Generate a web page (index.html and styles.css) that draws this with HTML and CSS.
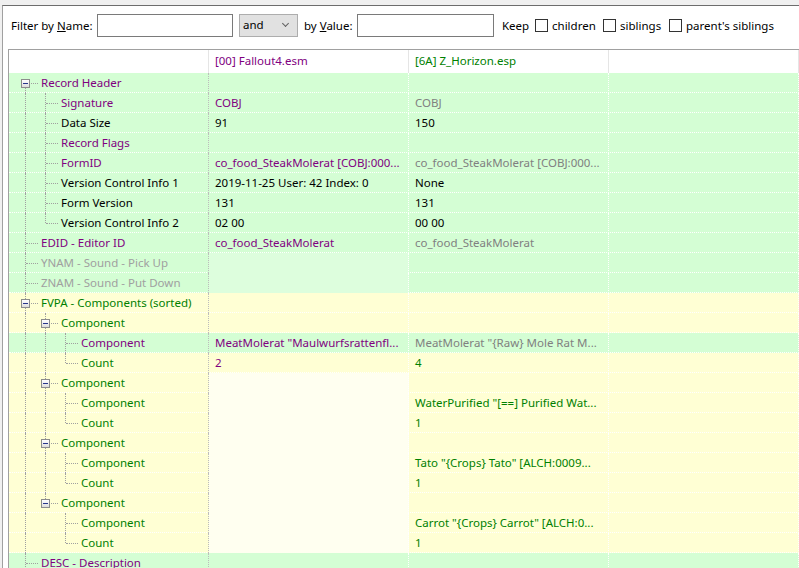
FILE: index.html
```html
<!DOCTYPE html>
<html lang="en">
<head>
    <meta charset="UTF-8">
    <title>Record View - COBJ</title>
    <link rel="stylesheet" href="styles.css">
</head>
<body>
    <div class="frame">

        <!-- Filter bar -->
        <div class="filter">
            <span class="lbl lbl-name">Filter by <u>N</u>ame:</span>
            <input class="txt txt-name" type="text">
            <div class="combo">and<span class="chev"></span></div>
            <span class="lbl lbl-value">by <u>V</u>alue:</span>
            <input class="txt txt-value" type="text">
            <span class="lbl lbl-keep">Keep</span>
            <span class="chk"></span><span class="lbl chk-lbl w-children">children</span>
            <span class="chk"></span><span class="lbl chk-lbl w-siblings">siblings</span>
            <span class="chk"></span><span class="lbl chk-lbl">parent's siblings</span>
        </div>

        <!-- Record tree -->
        <div class="tree">
            <div class="row head">
                <div class="name"></div>
                <div class="c purple">[00] Fallout4.esm</div>
                <div class="c green">[6A] Z_Horizon.esp</div>
                <div class="c"></div>
            </div>

            <div class="row bg-g">
                <div class="name"><span class="g v-bot h"><i class="box"></i></span><span class="t purple">Record Header</span></div>
                <div class="c"></div><div class="c"></div><div class="c"></div>
            </div>
            <div class="row bg-g">
                <div class="name"><span class="g v-full"></span><span class="g v-full h"></span><span class="t purple">Signature</span></div>
                <div class="c purple">COBJ</div><div class="c grey">COBJ</div><div class="c"></div>
            </div>
            <div class="row bg-g">
                <div class="name"><span class="g v-full"></span><span class="g v-full h"></span><span class="t">Data Size</span></div>
                <div class="c">91</div><div class="c">150</div><div class="c"></div>
            </div>
            <div class="row bg-g">
                <div class="name"><span class="g v-full"></span><span class="g v-full h"></span><span class="t purple">Record Flags</span></div>
                <div class="c"></div><div class="c"></div><div class="c"></div>
            </div>
            <div class="row bg-g">
                <div class="name"><span class="g v-full"></span><span class="g v-full h"></span><span class="t purple">FormID</span></div>
                <div class="c purple">co_food_SteakMolerat [COBJ:000...</div><div class="c grey">co_food_SteakMolerat [COBJ:000...</div><div class="c"></div>
            </div>
            <div class="row bg-g">
                <div class="name"><span class="g v-full"></span><span class="g v-full h"></span><span class="t">Version Control Info 1</span></div>
                <div class="c">2019-11-25 User: 42 Index: 0</div><div class="c">None</div><div class="c"></div>
            </div>
            <div class="row bg-g">
                <div class="name"><span class="g v-full"></span><span class="g v-full h"></span><span class="t">Form Version</span></div>
                <div class="c">131</div><div class="c">131</div><div class="c"></div>
            </div>
            <div class="row bg-g">
                <div class="name"><span class="g v-full"></span><span class="g v-top h"></span><span class="t">Version Control Info 2</span></div>
                <div class="c">02 00</div><div class="c">00 00</div><div class="c"></div>
            </div>
            <div class="row bg-g">
                <div class="name"><span class="g v-full h"></span><span class="t purple">EDID - Editor ID</span></div>
                <div class="c purple">co_food_SteakMolerat</div><div class="c grey">co_food_SteakMolerat</div><div class="c"></div>
            </div>
            <div class="row bg-g">
                <div class="name"><span class="g v-full h"></span><span class="t light">YNAM - Sound - Pick Up</span></div>
                <div class="c pale-g"></div><div class="c"></div><div class="c"></div>
            </div>
            <div class="row bg-g">
                <div class="name"><span class="g v-full h"></span><span class="t light">ZNAM - Sound - Put Down</span></div>
                <div class="c pale-g"></div><div class="c"></div><div class="c"></div>
            </div>

            <div class="row bg-y">
                <div class="name"><span class="g v-full h"><i class="box"></i></span><span class="t green">FVPA - Components (sorted)</span></div>
                <div class="c"></div><div class="c"></div><div class="c"></div>
            </div>
            <div class="row bg-y">
                <div class="name"><span class="g v-full"></span><span class="g v-full h"><i class="box"></i></span><span class="t green">Component</span></div>
                <div class="c"></div><div class="c"></div><div class="c"></div>
            </div>
            <div class="row bg-g">
                <div class="name"><span class="g v-full"></span><span class="g v-full"></span><span class="g v-full h"></span><span class="t purple">Component</span></div>
                <div class="c purple">MeatMolerat "Maulwurfsrattenfl...</div><div class="c grey">MeatMolerat "{Raw} Mole Rat M...</div><div class="c"></div>
            </div>
            <div class="row bg-y">
                <div class="name"><span class="g v-full"></span><span class="g v-full"></span><span class="g v-top h"></span><span class="t green">Count</span></div>
                <div class="c purple">2</div><div class="c green">4</div><div class="c"></div>
            </div>

            <div class="row bg-y">
                <div class="name"><span class="g v-full"></span><span class="g v-full h"><i class="box"></i></span><span class="t green">Component</span></div>
                <div class="c pale-y"></div><div class="c"></div><div class="c"></div>
            </div>
            <div class="row bg-y">
                <div class="name"><span class="g v-full"></span><span class="g v-full"></span><span class="g v-full h"></span><span class="t green">Component</span></div>
                <div class="c pale-y"></div><div class="c green">WaterPurified "[==] Purified Wat...</div><div class="c"></div>
            </div>
            <div class="row bg-y">
                <div class="name"><span class="g v-full"></span><span class="g v-full"></span><span class="g v-top h"></span><span class="t green">Count</span></div>
                <div class="c pale-y"></div><div class="c green">1</div><div class="c"></div>
            </div>

            <div class="row bg-y">
                <div class="name"><span class="g v-full"></span><span class="g v-full h"><i class="box"></i></span><span class="t green">Component</span></div>
                <div class="c pale-y"></div><div class="c"></div><div class="c"></div>
            </div>
            <div class="row bg-y">
                <div class="name"><span class="g v-full"></span><span class="g v-full"></span><span class="g v-full h"></span><span class="t green">Component</span></div>
                <div class="c pale-y"></div><div class="c green">Tato "{Crops} Tato" [ALCH:0009...</div><div class="c"></div>
            </div>
            <div class="row bg-y">
                <div class="name"><span class="g v-full"></span><span class="g v-full"></span><span class="g v-top h"></span><span class="t green">Count</span></div>
                <div class="c pale-y"></div><div class="c green">1</div><div class="c"></div>
            </div>

            <div class="row bg-y">
                <div class="name"><span class="g v-full"></span><span class="g v-top h"><i class="box"></i></span><span class="t green">Component</span></div>
                <div class="c pale-y"></div><div class="c"></div><div class="c"></div>
            </div>
            <div class="row bg-y">
                <div class="name"><span class="g v-full"></span><span class="g"></span><span class="g v-full h"></span><span class="t green">Component</span></div>
                <div class="c pale-y"></div><div class="c green">Carrot "{Crops} Carrot" [ALCH:0...</div><div class="c"></div>
            </div>
            <div class="row bg-y">
                <div class="name"><span class="g v-full"></span><span class="g"></span><span class="g v-top h"></span><span class="t green">Count</span></div>
                <div class="c pale-y"></div><div class="c green">1</div><div class="c"></div>
            </div>

            <div class="row bg-g">
                <div class="name"><span class="g v-full h"></span><span class="t purple">DESC - Description</span></div>
                <div class="c"></div><div class="c"></div><div class="c"></div>
            </div>
        </div>
    </div>
</body>
</html>
```

FILE: styles.css
```css
/* General */
body {
    margin: 0;
    height: 568px;
    overflow: hidden;
    background: #f0f0f0;
    font-family: 'Noto Sans', sans-serif;
    font-size: 11.5px;
    color: #000;
}

.frame {
    margin: 5px 0 0 2px;
    height: 563px;
    background: #fff;
    border-top: 1px solid #6d6d6d;
    border-left: 1px solid #a0a0a0;
    box-sizing: border-box;
}

/* Filter bar */
.filter {
    height: 43px;
    display: flex;
    align-items: flex-start;
    padding: 8px 0 0 8px;
    box-sizing: border-box;
    white-space: nowrap;
}

.lbl {
    line-height: 24px;
}

.lbl-name { width: 86px; }
.lbl-value { width: 53px; }
.lbl-keep { width: 33px; }
.w-children { width: 51px; }
.w-siblings { width: 49px; }

.txt {
    height: 23px;
    box-sizing: border-box;
    border: 1px solid #7a7a7a;
    padding: 0 4px;
    font: inherit;
    margin: 0;
}

.txt-name { width: 136px; margin-right: 6px; }
.txt-value { width: 137px; margin-right: 8px; }

.combo {
    width: 59px;
    height: 23px;
    box-sizing: border-box;
    background: #e1e1e1;
    border: 1px solid #adadad;
    padding-left: 3px;
    line-height: 19px;
    position: relative;
    margin-right: 6px;
}

.chev {
    position: absolute;
    right: 9px;
    top: 6px;
    width: 4px;
    height: 4px;
    border-right: 1px solid #606060;
    border-bottom: 1px solid #606060;
    transform: rotate(45deg);
}

.chk {
    width: 13px;
    height: 13px;
    box-sizing: border-box;
    border: 1px solid #333;
    background: #fff;
    margin: 5px 4px 0 0;
}

/* Tree */
.tree {
    margin-left: 5px;
    border-top: 1px solid #a0a0a0;
    border-left: 1px solid #a0a0a0;
    height: 100%;
}

.row {
    display: grid;
    grid-template-columns: 200px 200px 200px 1fr;
    height: 20px;
    box-sizing: border-box;
    border-bottom: 1px dotted #fff;
}

.row.head {
    height: 23px;
    border-bottom: none;
    background: #fff;
}

.row.head > div {
    line-height: 22px;
    border-right: 1px solid #e5e5e5;
}

.bg-g { background: #d4fed4; }
.bg-y { background: #ffffd4; }

.name {
    display: flex;
    align-items: flex-start;
    padding-left: 6px;
    border-right: 1px dotted #bcbcbc;
    min-width: 0;
    white-space: nowrap;
}

.c {
    padding: 0 6px;
    line-height: 20px;
    white-space: nowrap;
    overflow: hidden;
    border-right: 1px dotted #fff;
}

.pale-g { background: #ddfedd; }
.pale-y { background: #fffff0; }

.t {
    margin-left: 6px;
    line-height: 20px;
}

/* Text colours */
.purple { color: #800080; }
.green { color: #008000; }
.grey { color: #808080; }
.light { color: #a0a0a0; }

/* Tree guide lines */
.g {
    flex: none;
    width: 20px;
    height: 20px;
    position: relative;
}

.g::before,
.g::after {
    content: '';
    position: absolute;
}

.g.v-full::before {
    left: 10px;
    top: 0;
    height: 20px;
    border-left: 1px dotted #a0a0a0;
}

.g.v-top::before {
    left: 10px;
    top: 0;
    height: 10px;
    border-left: 1px dotted #a0a0a0;
}

.g.v-bot::before {
    left: 10px;
    top: 10px;
    height: 10px;
    border-left: 1px dotted #a0a0a0;
}

.g.h::after {
    left: 11px;
    top: 10px;
    width: 12px;
    border-top: 1px dotted #a0a0a0;
}

.box {
    position: absolute;
    left: 6px;
    top: 6px;
    width: 9px;
    height: 9px;
    box-sizing: border-box;
    border: 1px solid #8c8c8c;
    background: linear-gradient(#fff, #dcdcdc);
    z-index: 1;
}

.box::after {
    content: '';
    position: absolute;
    left: 1px;
    top: 3px;
    width: 5px;
    height: 1px;
    background: #27358a;
}
```
